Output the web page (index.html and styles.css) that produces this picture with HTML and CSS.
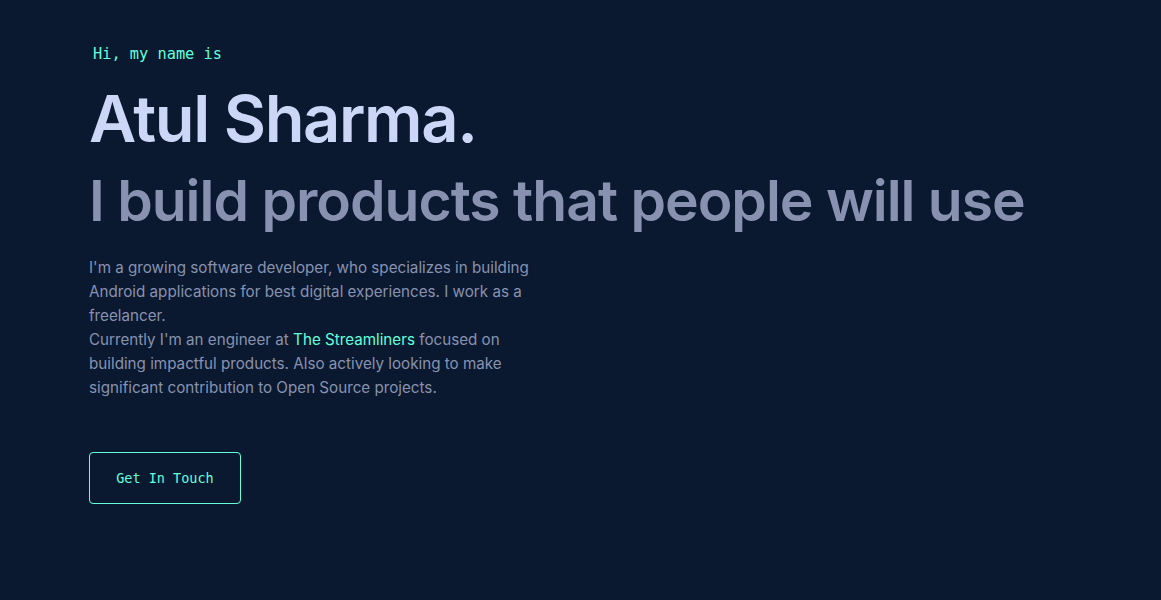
FILE: index.html
```html
<!DOCTYPE html>
<html lang="en">
<head>
<meta charset="utf-8">
<title>Atul Sharma</title>
<link rel="stylesheet" href="styles.css">
</head>
<body>
<main class="hero">
  <h1 class="hello">Hi, my name is</h1>
  <h2 class="name">Atul Sharma.</h2>
  <h3 class="tagline">I build products that people will use</h3>
  <p class="bio">I'm a growing software developer, who specializes in building Android applications for best digital experiences. I work as a freelancer.<br>Currently I'm an engineer at <a class="link" href="#">The Streamliners</a> focused on building impactful products. Also actively looking to make significant contribution to Open Source projects.</p>
  <a class="cta" href="#">Get In Touch</a>
</main>
</body>
</html>
```
FILE: styles.css
```css
html, body {
  margin: 0;
  padding: 0;
  background: #0a192f;
}
body {
  font-family: Inter, "Noto Sans", sans-serif;
  color: #8892b0;
}
.hero {
  display: flex;
  flex-direction: column;
  align-items: flex-start;
  padding: 43px 0 0 89px;
  min-height: 600px;
  box-sizing: border-box;
}
.hello {
  margin: 0 0 0 4px;
  font-family: "DejaVu Sans Mono", "Liberation Mono", monospace;
  font-weight: 400;
  font-size: 15.3px;
  line-height: 22px;
  color: #64ffda;
}
.name {
  margin: 15px 0 0 0;
  font-size: 65px;
  font-weight: 620;
  line-height: 78px;
  letter-spacing: -1.4px;
  color: #ccd6f6;
}
.tagline {
  margin: 8px 0 0 0;
  font-size: 57px;
  font-weight: 620;
  line-height: 70px;
  letter-spacing: -1px;
  color: #8892b0;
  white-space: nowrap;
}
.bio {
  margin: 20px 0 0 0;
  max-width: 450px;
  font-size: 15.2px;
  line-height: 24px;
  color: #8892b0;
}
.link {
  color: #64ffda;
  text-decoration: none;
}
.cta {
  margin-top: 52px;
  width: 152px;
  height: 52px;
  box-sizing: border-box;
  display: flex;
  align-items: center;
  justify-content: center;
  border: 1px solid #64ffda;
  border-radius: 4px;
  font-family: "DejaVu Sans Mono", "Liberation Mono", monospace;
  font-size: 13.5px;
  color: #64ffda;
  text-decoration: none;
}
```
